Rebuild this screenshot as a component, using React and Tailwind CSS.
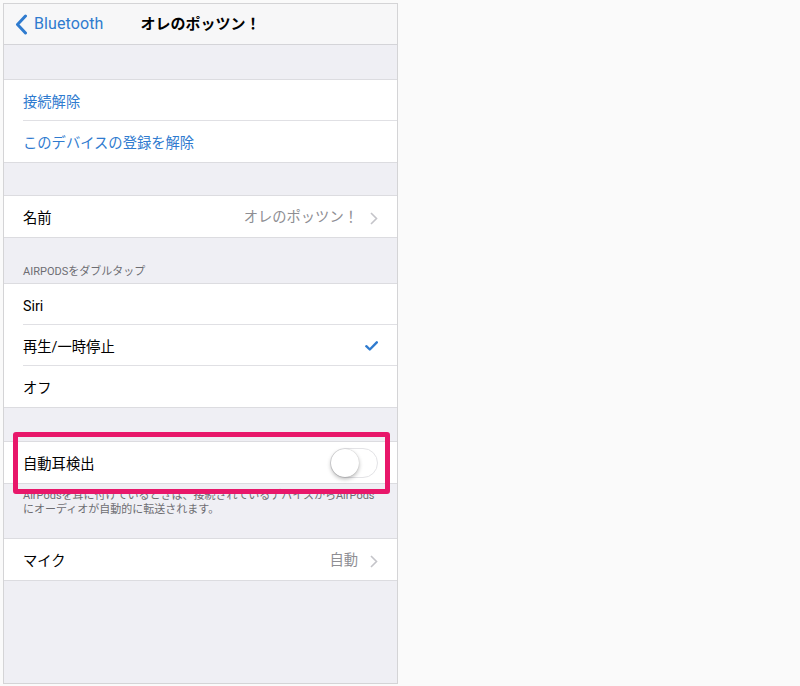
import React from "react";

const FONT = "font-['Roboto','Noto_Sans_CJK_JP',sans-serif]";

const Chevron = () => (
  <svg width="8" height="13" viewBox="0 0 8 13" className="ml-[12px] shrink-0">
    <path d="M1 1l5.5 5.5L1 12" fill="none" stroke="#c4c4c9" strokeWidth="1.6" />
  </svg>
);

const Check = () => (
  <svg width="13" height="10" viewBox="0 0 13 10" className="shrink-0 mt-[2px]">
    <path d="M1.3 5.2l3.5 3.3L11.8 1.3" fill="none" stroke="#2f7bcf" strokeWidth="2.4" strokeLinecap="round" strokeLinejoin="round" />
  </svg>
);

const Row = ({ children, last, right }) => (
  <div className="pl-[19px] bg-white">
    <div className={`h-[41px] pr-[19px] flex items-center justify-between ${last ? "" : "border-b border-[#e0e0e4]"}`}>
      <span className="pt-[3px]">{children}</span>
      {right}
    </div>
  </div>
);

const Group = ({ children }) => (
  <div className="border-y border-[#dcdce0] bg-white">{children}</div>
);

const Toggle = () => (
  <div className="w-[48px] h-[30px] rounded-full border border-[#e3e3e6] bg-white relative shrink-0">
    <div className="absolute left-[0px] top-[0px] w-[28px] h-[28px] rounded-full bg-white shadow-[0_2px_4px_rgba(0,0,0,0.28),0_0_1px_rgba(0,0,0,0.25)]" />
  </div>
);

export default function App() {
  return (
    <div className={`w-[800px] h-[686px] bg-[#fafafa] pt-[3px] pl-[3px] ${FONT}`}>
      <div className="relative w-[395px] h-[681px] border border-[#d4d4d6] bg-[#efeff4] flex flex-col">
        {/* nav */}
        <div className="h-[41px] bg-[#f7f7f8] border-b border-[#d4d4d8] relative flex items-center">
          <div className="flex items-center pl-[11px] text-[#2f7bcf] text-[16px]">
            <svg width="13" height="21" viewBox="0 0 13 21">
              <path d="M10.5 2L2.5 10.5l8 8.5" fill="none" stroke="#2f7bcf" strokeWidth="3" strokeLinecap="round" strokeLinejoin="round" />
            </svg>
            <span className="ml-[6px] tracking-[0.1px]">Bluetooth</span>
          </div>
          <div className="absolute left-0 right-0 text-center font-bold text-[15px] text-black pointer-events-none">
            オレのポッツン！
          </div>
        </div>

        <div className="h-[34px]" />
        <Group>
          <Row>
            <span className="text-[14.3px] text-[#2f7bcf]">接続解除</span>
          </Row>
          <Row last>
            <span className="text-[14.3px] text-[#2f7bcf]">このデバイスの登録を解除</span>
          </Row>
        </Group>

        <div className="h-[32px]" />
        <Group>
          <Row
            last
            right={
              <span className="flex items-center text-[14.3px] text-[#8e8e93] pt-[3px]">
                オレのポッツン！
                <Chevron />
              </span>
            }
          >
            <span className="text-[14.3px] text-black">名前</span>
          </Row>
        </Group>

        <div className="h-[45px] pl-[19px] pb-[3px] flex items-end text-[11px] text-[#6d6d72]">
          AIRPODSをダブルタップ
        </div>
        <Group>
          <Row>
            <span className="text-[14.3px] text-black">Siri</span>
          </Row>
          <Row right={<Check />}>
            <span className="text-[14.3px] text-black">再生/一時停止</span>
          </Row>
          <Row last>
            <span className="text-[14.3px] text-black">オフ</span>
          </Row>
        </Group>

        <div className="h-[33px]" />
        <Group>
          <Row last right={<Toggle />}>
            <span className="text-[14.3px] text-black">自動耳検出</span>
          </Row>
        </Group>

        <div className="h-[54px] pl-[19px] pr-[14px] pt-[5px] text-[11px] leading-[14px] text-[#6d6d72]">
          AirPodsを耳に付けているときは、接続されているデバイスからAirPods
          <br />
          にオーディオが自動的に転送されます。
        </div>
        <Group>
          <Row
            last
            right={
              <span className="flex items-center text-[14.3px] text-[#8e8e93] pt-[3px]">
                自動
                <Chevron />
              </span>
            }
          >
            <span className="text-[14.3px] text-black">マイク</span>
          </Row>
        </Group>
        <div className="flex-1" />

        {/* annotation */}
        <div className="absolute left-[9px] top-[428px] w-[377px] h-[62px] border-[5px] border-[#e8176a] rounded-[3px]" />
      </div>
    </div>
  );
}
